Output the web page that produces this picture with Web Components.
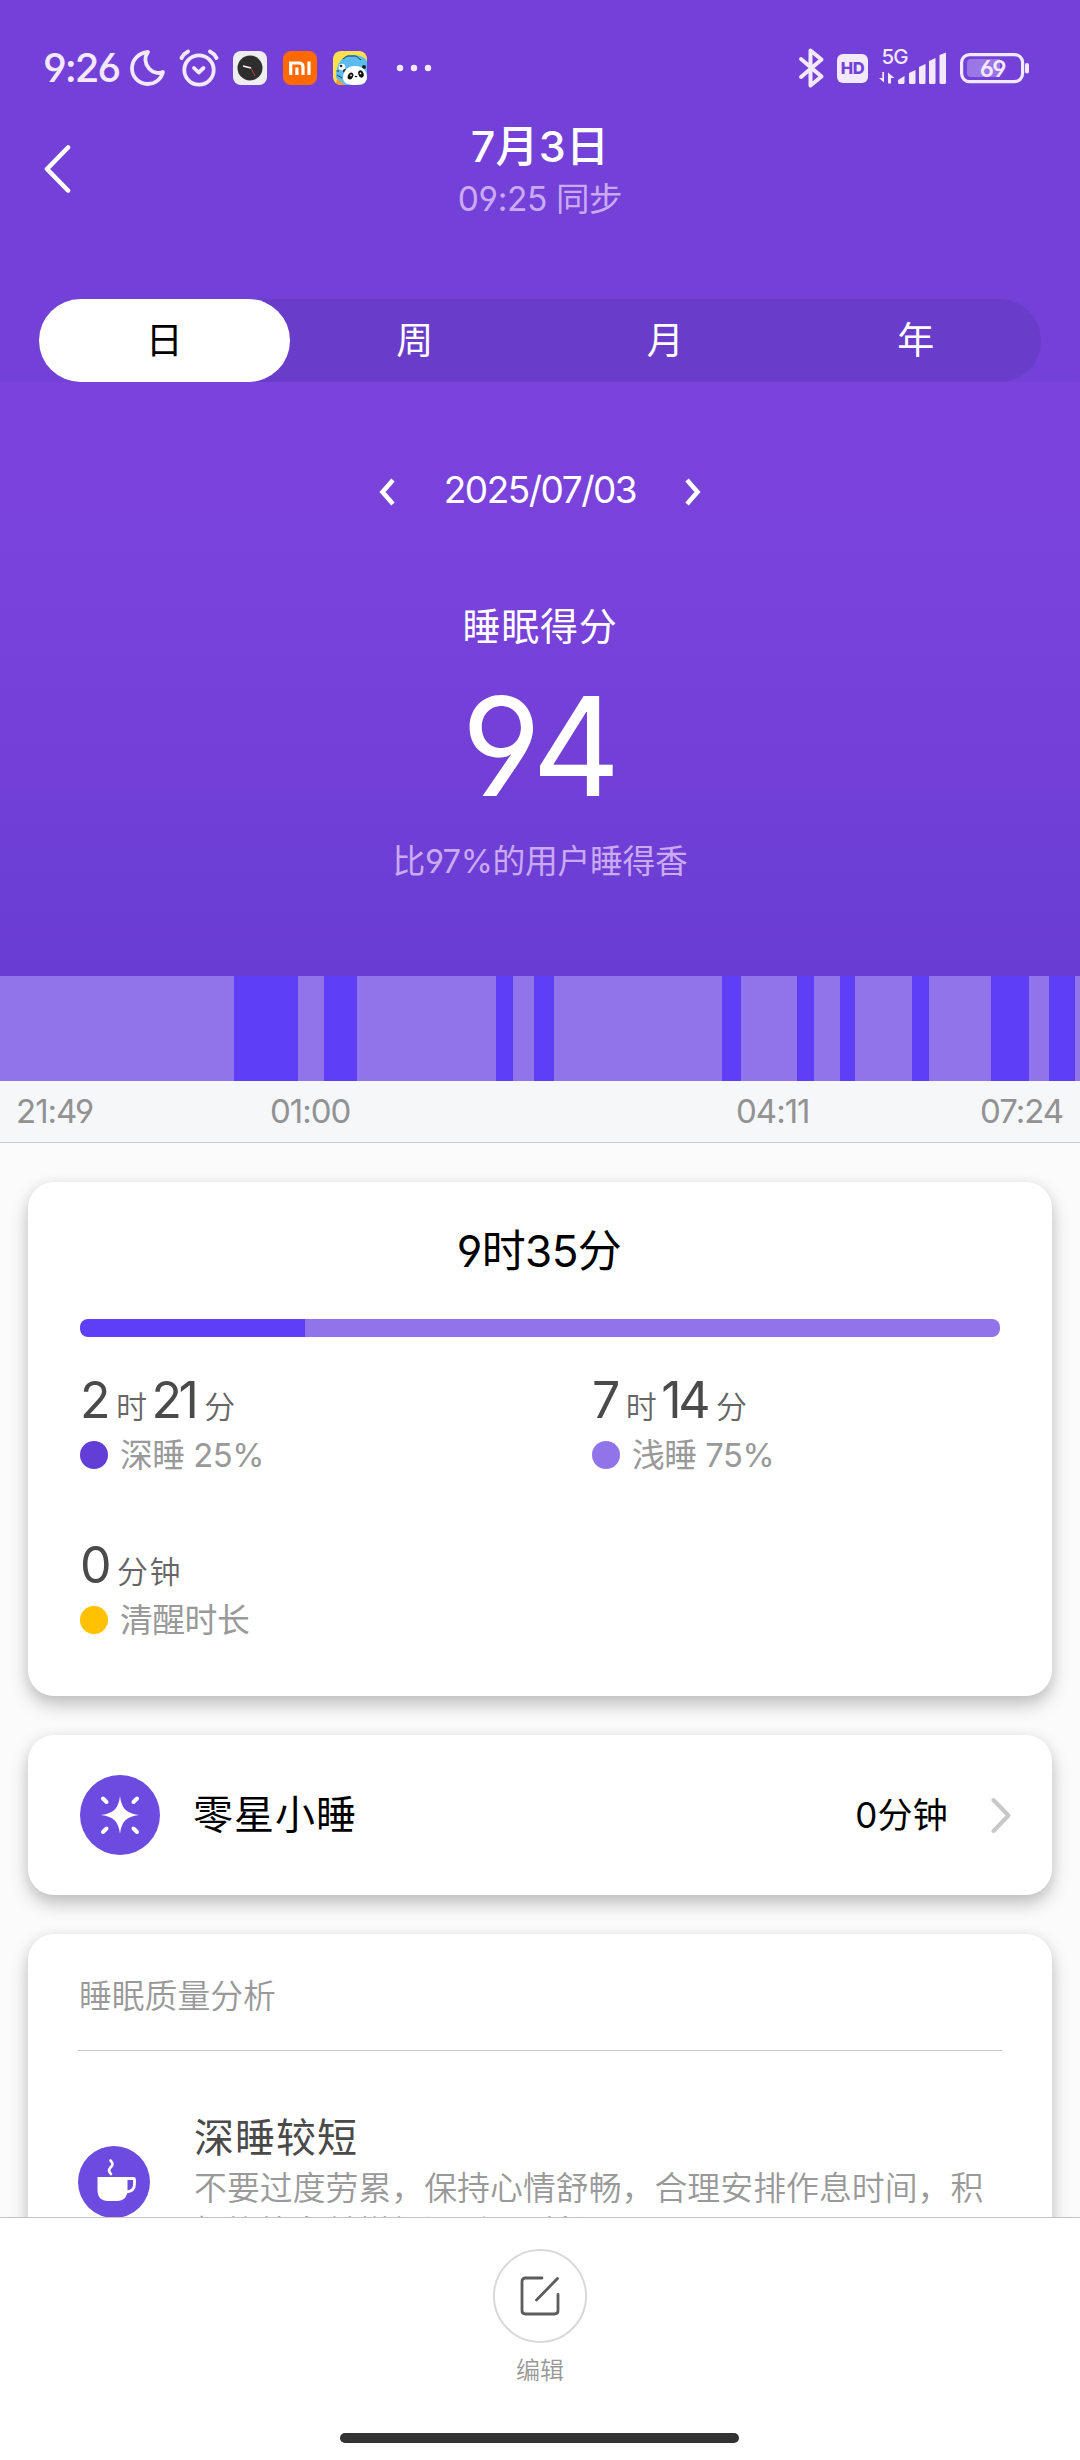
<!DOCTYPE html>
<html lang="zh-CN">
<head>
<meta charset="utf-8">
<title>睡眠</title>
<style>
    html, body { margin: 0; padding: 0; }

    body {
        width: 1080px;
        height: 2460px;
        overflow: hidden;
        background: #fbfbfb;
        font-family: Inter, "Noto Sans CJK SC", sans-serif;
        font-feature-settings: "cv03", "cv04";
    }
</style>
</head>
<body>
<sleep-page></sleep-page>

<script>
function define(name, html, setup) {
    const template = document.createElement('template')
    template.innerHTML = html

    customElements.define(name, class extends HTMLElement {
        constructor() {
            super()
            this.attachShadow({ mode: 'open' }).append(template.content.cloneNode(true))
        }

        connectedCallback() {
            if (setup) setup(this, this.shadowRoot)
        }
    })
}

define('status-bar', /*html*/`
<style>
    :host {
        display: flex;
        align-items: center;
        height: 64px;
        padding: 36px 50px 0 43px;
        color: #f3e9fd;
    }
    svg { display: block; flex: none; overflow: visible; }
    .time { width: 87px; font-size: 40px; font-weight: 540; line-height: 64px; letter-spacing: -2px; white-space: nowrap; }
    .moon { margin-right: 14px; }
    .alarm { margin-right: 14px; }
    .app { margin-right: 16px; }
    .dots { margin-left: 12px; }
    .space { flex: 1; }
    .hd {
        width: 31px; height: 29px; margin: 0 11px 0 13px;
        border-radius: 6px; background: #f3e9fd; color: #7340d8;
        font-size: 16.500px; font-weight: 800; line-height: 29px; text-align: center; letter-spacing: -.5px;
    }
    .signal { margin-right: 13px; }
    .signal text, .battery text { font-family: Inter, sans-serif; fill: #f3e9fd; }
</style>
<span class="time">9:26</span>
<svg class="moon" width="35" height="36" viewBox="0 0 35 36" fill="none" stroke="#f3e9fd" stroke-width="3.8" stroke-linejoin="round">
    <path d="M18 2C8 3 2 10 2 18.500C2 27 9 34 17.500 34C25 34 31 29.500 33 22C29 24 23 23 19 18.500C14.500 13 14.500 7 18 2Z"/>
</svg>
<svg class="alarm" width="40" height="38" viewBox="0 0 40 38" fill="none" stroke="#f3e9fd" stroke-width="3.800" stroke-linecap="round" stroke-linejoin="round">
    <circle cx="20" cy="21" r="14.700"/>
    <path d="M2.500 9C4 6 6 4 9 2.500M37.500 9C36 6 34 4 31 2.500" stroke-width="4"/>
    <path d="M15 19L19.700 23.500L24.500 19"/>
</svg>
<svg class="app" width="34" height="34" viewBox="0 0 34 34">
    <rect width="34" height="34" rx="8" fill="#eeeeee"/>
    <circle cx="17" cy="17" r="12.500" fill="#2e2e2e"/>
    <path d="M10 15L18 17" stroke="#fff" stroke-width="1.300"/>
    <path d="M18 17L22 25" stroke="#c33d3d" stroke-width="1"/>
</svg>
<svg class="app" width="34" height="34" viewBox="0 0 34 34">
    <rect width="34" height="34" rx="8" fill="#ff6900"/>
    <path d="M7.700 24V12H16C18.500 12 20 13.500 20 16V24M13.900 16.500V24M26 10.500V24" fill="none" stroke="#fff" stroke-width="3.200"/>
</svg>
<svg class="app" width="34" height="34" viewBox="0 0 34 34">
    <clipPath id="r"><rect width="34" height="34" rx="8"/></clipPath>
    <g clip-path="url(#r)">
        <rect width="34" height="34" fill="#ffe14f"/>
        <path d="M3 26C3 11 10 4 20 4C29 4 34 8 34 11V34H12L4 28Z" fill="#5cbcf0"/>
        <path d="M4 28L12 34H3Z" fill="#f79a33"/>
        <path d="M4 24L9 27M3.500 20H6M10 8L14 5L23 5L28 9" stroke="#203a55" fill="none" stroke-width="1"/>
        <circle cx="9" cy="16" r="3.300" fill="#fff"/><circle cx="8" cy="15" r="1.300" fill="#222"/>
        <circle cx="12" cy="20" r="2" fill="#222"/><circle cx="31" cy="16" r="2" fill="#222"/>
        <path d="M10 27C10 19 15 15 22 15C29 15 34 19 34 27C34 32 29 34 22 34C15 34 10 32 10 27Z" fill="#fff"/>
        <ellipse cx="17.500" cy="25" rx="2.600" ry="3.700" fill="#111" transform="rotate(25 17.500 25)"/>
        <ellipse cx="28" cy="23" rx="2.600" ry="3.700" fill="#111" transform="rotate(-20 28 23)"/>
        <circle cx="18" cy="24.300" r=".9" fill="#fff"/><circle cx="27.500" cy="22.300" r=".9" fill="#fff"/>
        <ellipse cx="23" cy="25.500" rx="1.300" ry=".8" fill="#111"/>
    </g>
</svg>
<svg class="dots" width="40" height="8" viewBox="0 0 40 8" fill="#f3e9fd">
    <circle cx="5" cy="4" r="3.200"/><circle cx="19" cy="4" r="3.200"/><circle cx="33" cy="4" r="3.200"/>
</svg>
<span class="space"></span>
<svg width="25" height="40" viewBox="0 0 25 40" fill="none" stroke="#f3e9fd" stroke-width="4" stroke-linecap="round" stroke-linejoin="round">
    <path d="M2 11L22.500 28.500L11.500 37.500V2.500L22.500 11.500L2 29"/>
</svg>
<span class="hd">HD</span>
<svg class="signal" width="68" height="40" viewBox="0 0 68 40" fill="#f3e9fd">
    <text x="2.500" y="16" font-size="20.500" font-weight="500" letter-spacing="-1">5G</text>
    <path d="M5 24V34.500L0 30H3.300V24ZM9 35.500V24.500L15.500 30H12V35.500Z"/>
    <path d="M19 34.500V32L25.500 28V34.500Q25.500 36 24 36H20.500Q19 36 19 34.500ZM30 34.500V25L36.500 22V34.500Q36.500 36 35 36H31.500Q30 36 30 34.500ZM40 34.500V19L46.500 16V34.500Q46.500 36 45 36H41.500Q40 36 40 34.500ZM50 34.500V13L56.500 10V34.500Q56.500 36 55 36H51.500Q50 36 50 34.500ZM60.500 34.500V7L67 4.500V34.500Q67 36 65.500 36H62Q60.500 36 60.500 34.500Z"/>
</svg>
<svg class="battery" width="70" height="32" viewBox="0 0 70 32">
    <rect x="1.600" y="2.600" width="61" height="27" rx="8" fill="none" stroke="#f3e9fd" stroke-width="3.200"/>
    <path d="M11 7H40V25H11Q7 25 7 21V11Q7 7 11 7Z" fill="#9a77e4"/>
    <rect x="65" y="11" width="4" height="10.500" rx="2" fill="#f3e9fd"/>
    <text x="32.500" y="24.500" font-size="23.500" font-weight="600" letter-spacing="-1" text-anchor="middle">69</text>
</svg>
`)

define('title-bar', /*html*/`
<style>
    :host {
        display: grid;
        grid-template-columns: 200px 1fr 200px;
        height: 199px;
        color: #fff;
        text-align: center;
    }
    svg { display: block; margin: 45px 0 0 44px; }
    .title { margin-top: 17px; font-size: 43px; font-weight: 500; line-height: 58px; letter-spacing: .2px; }
    .sync { margin-top: 2px; font-size: 33.500px; font-weight: 390; line-height: 44px; color: #caaaf2; letter-spacing: -.4px; }
</style>
<svg width="28" height="48" viewBox="0 0 28 48" fill="none" stroke="#fff" stroke-width="4.600" stroke-linecap="round" stroke-linejoin="round">
    <path d="M24 2.500L3 24L24 45.500"/>
</svg>
<div>
    <div class="title"><slot name="title"></slot></div>
    <div class="sync"><slot name="sync"></slot></div>
</div>
`)

define('range-tabs', /*html*/`
<style>
    :host {
        display: grid;
        grid-template-columns: repeat(4, 1fr);
        height: 83px;
        margin: 0 39px;
        border-radius: 42px;
        background: #6a3cca;
        color: #fff;
        font-size: 37px;
        line-height: 83px;
        text-align: center;
    }
    ::slotted([selected]) { border-radius: 42px; background: #fff; color: #000; }
</style>
<slot></slot>
`)

define('score-panel', /*html*/`
<style>
    :host {
        display: flex;
        flex: none;
        flex-direction: column;
        align-items: center;
        height: 594px;
        background: linear-gradient(#7b43dc, #7942db 35%, #693dd2);
        color: #fff;
    }
    .date { display: flex; align-items: center; justify-content: space-between; width: 322px; height: 60px; margin-top: 77px; font-size: 37px; letter-spacing: -1.500px; }
    svg { display: block; margin-top: 5px; }
    .label { margin-top: 79px; font-size: 38px; font-weight: 390; line-height: 56px; letter-spacing: .8px; }
    .score { margin-top: 22px; padding-right: 1px; font-size: 137px; line-height: 140px; letter-spacing: -3px; }
    .rank { margin-top: 23px; font-size: 32.800px; font-weight: 390; line-height: 44px; color: #caaaf2; letter-spacing: -.3px; white-space: nowrap; }
</style>
<div class="date">
    <svg width="16" height="28" viewBox="0 0 16 28" fill="none" stroke="#fff" stroke-width="4.600"><path d="M14 2L3.500 14L14 26"/></svg>
    <slot name="date"></slot>
    <svg width="16" height="28" viewBox="0 0 16 28" fill="none" stroke="#fff" stroke-width="4.600"><path d="M2 2L12.500 14L2 26"/></svg>
</div>
<div class="label">睡眠得分</div>
<div class="score"><slot name="score"></slot></div>
<div class="rank"><slot name="rank"></slot></div>
`)

// stages: alternating light / deep widths, starting with light
define('sleep-chart', /*html*/`
<style>
    :host { display: block; flex: none; }
    .stages { display: flex; height: 105px; }
    .stages i { background: #9174ea; }
    .stages i:nth-child(even) { background: #5e3ff7; }
    .axis {
        display: flex;
        height: 61px;
        padding-left: 16px;
        border-bottom: 1px solid #c8cacb;
        background: #f5f7f9;
        color: #929292;
        font-size: 33px;
        font-weight: 380;
        line-height: 61px;
        letter-spacing: -1px;
    }
    .axis span:nth-child(1) { width: 254px; }
    .axis span:nth-child(2) { width: 466px; }
    .axis span:nth-child(3) { width: 244px; }
</style>
<div class="stages"></div>
<div class="axis"></div>
`, (el, root) => {
    root.querySelector('.stages').innerHTML = el.getAttribute('stages').split(' ')
        .map(w => `<i style="flex: ${w}"></i>`).join('')
    root.querySelector('.axis').innerHTML = el.getAttribute('times').split(' ')
        .map(t => `<span>${t}</span>`).join('')
})

define('info-card', /*html*/`
<style>
    :host {
        display: block;
        border-radius: 26px;
        background: #fff;
        box-shadow: 0 9px 18px rgba(0, 0, 0, .23), 0 0 14px rgba(0, 0, 0, .05);
    }
</style>
<slot></slot>
`)

define('sleep-total', /*html*/`
<style>
    :host { display: block; height: 514px; padding: 0 52px; box-sizing: border-box; }
    .total { padding: 39px 2px 0 0; font-size: 44px; font-weight: 390; line-height: 60px; text-align: center; color: #000; letter-spacing: -.6px; }
    .bar { height: 18px; margin-top: 38px; border-radius: 8px; background: linear-gradient(90deg, #5e3ff7 225px, #9174ea 225px); }
    .grid { display: grid; grid-template-columns: 512px 1fr; grid-auto-rows: 165px; padding-top: 35px; }
</style>
<div class="total"><slot name="total"></slot></div>
<div class="bar"></div>
<div class="grid"><slot></slot></div>
`)

define('sleep-stat', /*html*/`
<style>
    :host { display: block; }
    .value { height: 56px; font-size: 50px; line-height: 56px; color: #4a4a4a; letter-spacing: -3.500px; white-space: nowrap; }
    ::slotted(small) { font-size: 31px; font-weight: 350; color: #666; letter-spacing: 1.500px; margin: 0 3px 0 9px; }
    .label { display: flex; align-items: center; height: 44px; margin-top: 5px; font-size: 32.800px; font-weight: 380; line-height: 44px; color: #999; letter-spacing: -.5px; }
    i { width: 28px; height: 28px; margin-right: 12px; border-radius: 50%; background: var(--dot); }
</style>
<div class="value"><slot></slot></div>
<div class="label"><i></i><slot name="label"></slot></div>
`)

define('nap-row', /*html*/`
<style>
    :host { display: flex; align-items: center; height: 160px; padding: 0 40px 0 52px; color: #000; }
    svg { display: block; }
    .name { flex: 1; margin-left: 33px; font-size: 40px; letter-spacing: 1px; line-height: 60px; }
    .value { margin: 0 43px 6px 0; font-size: 35px; letter-spacing: .2px; }
</style>
<svg width="80" height="80" viewBox="0 0 80 80">
    <circle cx="40" cy="40" r="40" fill="#6c4be0"/>
    <path d="M40 21C41.500 33 46 38.500 59 40C46 41.500 41.500 47 40 59C38.500 47 34 41.500 21 40C34 38.500 38.500 33 40 21Z" fill="#fff"/>
    <path d="M23 23.500L26.500 27M57 23.500L53.500 27M23 57L26.500 53.500M57 57L53.500 53.500" stroke="#fff" stroke-width="4" stroke-linecap="round"/>
</svg>
<span class="name"><slot></slot></span>
<span class="value"><slot name="value"></slot></span>
<svg width="21" height="38" viewBox="0 0 21 38" fill="none" stroke="#c8c8c8" stroke-width="4" stroke-linecap="round" stroke-linejoin="round">
    <path d="M2.500 4L17.500 19.500L2.500 35"/>
</svg>
`)

define('sleep-analysis', /*html*/`
<style>
    :host { display: block; height: 420px; padding: 0 50px; }
    .head { height: 116px; padding-left: 1px; border-bottom: 1px solid #c8c8c8; font-size: 32.800px; font-weight: 350; line-height: 124px; color: #999; }
    .row { display: flex; padding-top: 59px; }
    svg { display: block; flex: none; margin: 36px 44px 0 0; }
    .title { font-size: 40px; line-height: 56px; letter-spacing: 1px; color: #4a4a4a; }
    .text { width: 812px; font-size: 32.900px; font-weight: 350; line-height: 44px; color: #999; white-space: pre; }
</style>
<div class="head">睡眠质量分析</div>
<div class="row">
    <svg width="72" height="72" viewBox="0 0 72 72">
        <circle cx="36" cy="36" r="36" fill="#6c4be0"/>
        <path d="M19.500 31H49.500V44C49.500 51 45.500 55 39 55H30C23 55 19.500 51 19.500 44Z" fill="#fff"/>
        <path d="M48 32.500H55.500Q56.500 32.500 56.500 34V38Q56.500 45.500 48 46" fill="none" stroke="#fff" stroke-width="2.800"/>
        <path d="M32.500 14.500C36 18 34.500 19.500 32.500 21.500C30.500 23.500 31 26 33 28" fill="none" stroke="#fff" stroke-width="2.600" stroke-linecap="round"/>
    </svg>
    <div>
        <div class="title"><slot name="title"></slot></div>
        <div class="text"><slot></slot></div>
    </div>
</div>
`)

define('bottom-bar', /*html*/`
<style>
    :host {
        display: flex;
        flex: none;
        flex-direction: column;
        align-items: center;
        box-sizing: border-box;
        height: 243px;
        border-top: 1px solid #c4c4c4;
        background: #fff;
    }
    .edit { display: grid; place-items: center; box-sizing: border-box; width: 94px; height: 94px; margin-top: 31px; border: 2px solid #d9d9d9; border-radius: 50%; }
    .label { margin-top: 10px; font-size: 24px; font-weight: 350; line-height: 36px; color: #999; }
    .home { width: 399px; height: 10px; margin: 44px 1px 0 0; border-radius: 5px; background: #333; }
</style>
<div class="edit">
    <svg width="40" height="40" viewBox="0 0 40 40" fill="none" stroke="#5c5c5c" stroke-width="2.800" stroke-linecap="round" stroke-linejoin="round">
        <path d="M22 2H5.500Q2 2 2 5.500V34.500Q2 38 5.500 38H34.500Q38 38 38 34.500V18.500M37.500 2.500L16.500 24"/>
    </svg>
</div>
<div class="label"><slot></slot></div>
<div class="home"></div>
`)

define('sleep-page', /*html*/`
<style>
    :host { display: flex; flex-direction: column; height: 2460px; }
    .top { flex: none; background: #7340d8; }
    .content { display: flex; flex: 1; flex-direction: column; min-height: 0; overflow: hidden; }
    .cards { display: flex; flex: none; flex-direction: column; gap: 39px; padding: 39px 28px 0; }
</style>
<div class="top">
    <status-bar></status-bar>
    <title-bar><span slot="title">7月3日</span><span slot="sync">09:25 同步</span></title-bar>
    <range-tabs><span selected>日</span><span>周</span><span>月</span><span>年</span></range-tabs>
</div>
<div class="content">
    <score-panel>
        <span slot="date">2025/07/03</span>
        <span slot="score">94</span>
        <span slot="rank">比97%的用户睡得香</span>
    </score-panel>
    <sleep-chart
        stages="234.2 63.7 26.5 32.400 139.200 16.800 21 20.200 167.800 18.700 56.500 17 26 15 56.600 17.400 62 37.500 20.500 26 5"
        times="21:49 01:00 04:11 07:24"></sleep-chart>
    <div class="cards">
        <info-card>
            <sleep-total>
                <span slot="total">9时35分</span>
                <sleep-stat style="--dot: #633ed6">2<small>时</small>21<small>分</small><span slot="label">深睡 25%</span></sleep-stat>
                <sleep-stat style="--dot: #9174ea">7<small>时</small>14<small>分</small><span slot="label">浅睡 75%</span></sleep-stat>
                <sleep-stat style="--dot: #ffc100">0<small>分钟</small><span slot="label">清醒时长</span></sleep-stat>
            </sleep-total>
        </info-card>
        <info-card>
            <nap-row>零星小睡<span slot="value">0分钟</span></nap-row>
        </info-card>
        <info-card>
            <sleep-analysis><span slot="title">深睡较短</span>不要过度劳累，保持心情舒畅，合理安排作息时间，积
极锻炼有益增加深睡眠时长</sleep-analysis>
        </info-card>
    </div>
</div>
<bottom-bar>编辑</bottom-bar>
`)
</script>
</body>
</html>
